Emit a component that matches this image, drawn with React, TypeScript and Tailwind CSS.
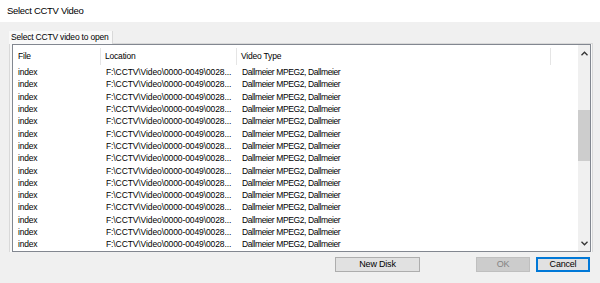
import React from "react"

const rows = Array.from({ length: 15 }, () => ({
  file: "index",
  location: "F:\\CCTV\\Video\\0000-0049\\0028...",
  type: "Dallmeier MPEG2, Dallmeier",
}))

function Chevron({ up }: { up?: boolean }) {
  return (
    <svg width="7" height="5" viewBox="0 0 7 5" className="block">
      <path
        d={up ? "M0.5 4.2 L3.5 1.2 L6.5 4.2" : "M0.5 0.8 L3.5 3.8 L6.5 0.8"}
        fill="none"
        stroke="#333"
        strokeWidth="1.3"
      />
    </svg>
  )
}

export default function App() {
  return (
    <div
      className="w-[600px] h-[283px] bg-[#f0f0f0] flex flex-col overflow-hidden text-black font-['Liberation_Sans',Arial,sans-serif]"
    >
      {/* Title bar */}
      <div className="h-[22px] bg-white flex items-center pl-[7px] text-[9.5px] tracking-[-0.3px] shrink-0">
        Select CCTV Video
      </div>

      <div className="flex flex-col pl-[9px] pr-[7px] pt-[9px]">
        {/* Tab */}
        <div className="flex items-end h-[13px]">
          <div className="h-[13px] w-[104px] bg-[#f9f9f9] border-r border-[#d9d9d9] text-[8.5px] tracking-[-0.2px] leading-[13px] pl-[2px] whitespace-nowrap">
            Select CCTV video to open
          </div>
          <div className="flex-1 border-b border-[#d9d9d9]" />
        </div>

        {/* Tab page */}
        <div className="border-x border-[#d9d9d9] pl-[2px] pr-[1px] bg-[#f9f9f9]">
          <div className="h-[208px] border border-[#828790] bg-white flex relative">
            <div className="flex-1 flex flex-col overflow-hidden">
              {/* Header */}
              <div className="h-[21px] pt-[1px] flex items-center text-[8.5px] tracking-[-0.2px] shrink-0">
                <div className="w-[88px] h-[17px] flex items-center pl-[5px] border-r border-[#e5e5e5]">File</div>
                <div className="w-[136px] h-[17px] flex items-center pl-[4px] border-r border-[#e5e5e5]">Location</div>
                <div className="w-[314px] h-[17px] flex items-center pl-[4px] border-r border-[#e5e5e5]">Video Type</div>
              </div>
              {/* Rows */}
              {rows.map((r, i) => (
                <div key={i} className="h-[12.3px] flex items-center text-[8.5px] leading-[12px] shrink-0 whitespace-nowrap">
                  <div className="w-[88px] pl-[5px] tracking-[-0.2px]">{r.file}</div>
                  <div className="w-[136px] pl-[5px] tracking-[-0.1px]">{r.location}</div>
                  <div className="pl-[5px] tracking-[-0.4px]">{r.type}</div>
                </div>
              ))}
            </div>

            {/* Scrollbar */}
            <div className="w-[12px] bg-[#f0f0f0] flex flex-col items-center">
              <div className="h-[16px] flex items-center justify-center">
                <Chevron up />
              </div>
              <div className="h-[49px]" />
              <div className="h-[51px] w-full bg-[#cdcdcd]" />
              <div className="flex-1" />
              <div className="h-[16px] flex items-center justify-center">
                <Chevron />
              </div>
            </div>
          </div>
        </div>

        {/* Buttons */}
        <div className="flex items-center mt-[5px] text-[9px] tracking-[-0.2px]">
          <div className="w-[326px]" />
          <button className="w-[85px] h-[15px] bg-[#e1e1e1] border border-[#adadad] leading-none">
            New Disk
          </button>
          <div className="w-[56px]" />
          <button className="w-[54px] h-[15px] bg-[#cccccc] border border-[#bfbfbf] text-[#838383] leading-none" disabled>
            OK
          </button>
          <div className="w-[6px]" />
          <button className="w-[54px] h-[15px] bg-[#e1e1e1] border-2 border-[#0078d7] leading-none">
            Cancel
          </button>
        </div>
      </div>
    </div>
  )
}
